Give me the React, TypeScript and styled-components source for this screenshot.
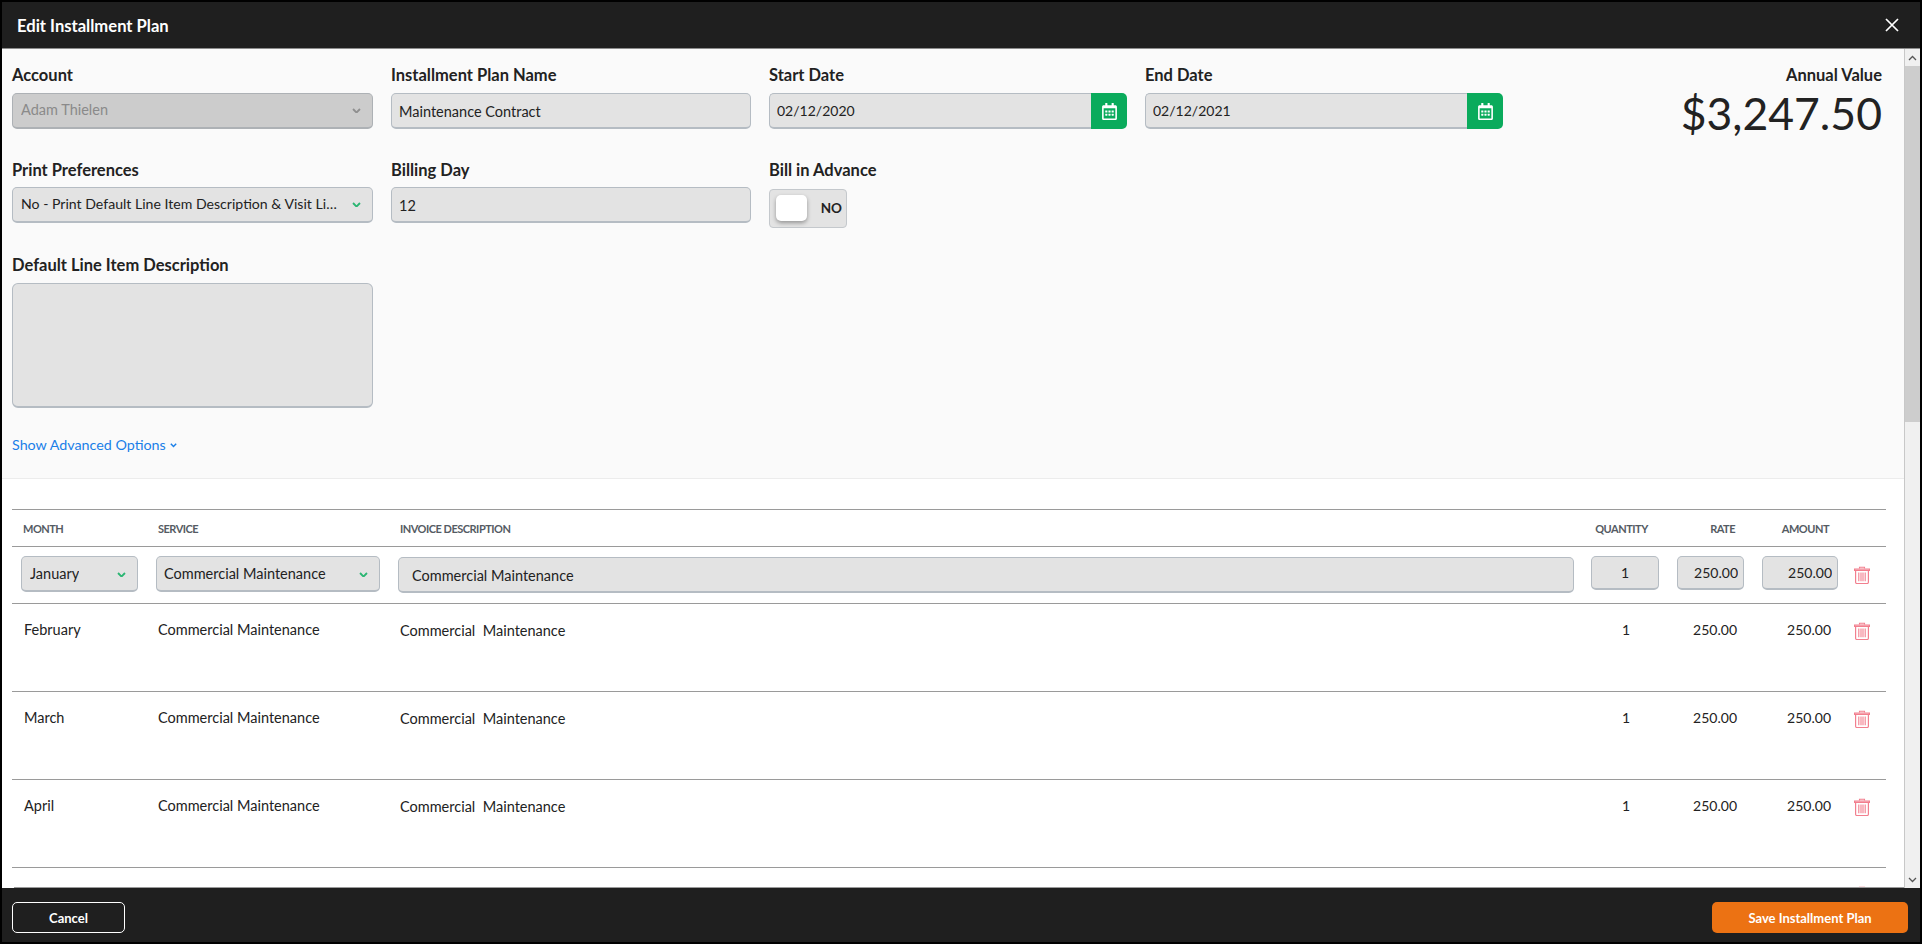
import styled, { createGlobalStyle } from "styled-components";
import { FaRegCalendarAlt } from "react-icons/fa";

const months = ["February", "March", "April", "May"];

const GlobalStyle = createGlobalStyle`
  html, body {
    margin: 0;
    padding: 0;
    background: #000;
    overflow: hidden;
  }
  * {
    box-sizing: border-box;
  }
  body, input, textarea, button {
    font-family: "Lato", "Liberation Sans", sans-serif;
  }
`;

const Chevron = ({ color = "#2bb673", size = 9 }: { color?: string; size?: number }) => (
  <StyledChevron width={size} height={size * 0.66} viewBox="0 0 9 6" fill="none">
    <path d="M1 1 4.5 4.6 8 1" stroke={color} strokeWidth="1.9" />
  </StyledChevron>
);

const TrashIcon = () => (
  <svg width="16" height="18" viewBox="0 0 16 18" fill="none" stroke="#f27f8e">
    <path d="M5.5 2.5V1.2h5v1.3" strokeWidth="1.1" />
    <path d="M.6 3h14.8v1.4H.6z" strokeWidth="1.2" />
    <path d="M1.6 4.5v11.8c0 .7.5 1.2 1.2 1.2h10.4c.7 0 1.2-.5 1.2-1.2V4.5" strokeWidth="1.2" />
    <path d="M4.8 6.5v8.8M7 6.5v8.8M9 6.5v8.8M11.2 6.5v8.8" strokeWidth="1.1" />
  </svg>
);

const App = () => {
  return (
    <StyledModal>
      <GlobalStyle />
      <StyledHeader>
        <StyledTitle>Edit Installment Plan</StyledTitle>
        <svg width="14" height="14" viewBox="0 0 14 14" stroke="#fff" strokeWidth="1.7">
          <path d="M1 1l12 12M13 1 1 13" />
        </svg>
      </StyledHeader>

      <StyledMiddle>
        <StyledContent>
          <StyledScroller>
            <StyledForm>
              <StyledFormRow $mb={31}>
                <StyledField $w={361}>
                  <StyledLabel>Account</StyledLabel>
                  <StyledSelect $disabled>
                    <span>Adam Thielen</span>
                    <Chevron color="#8f8f8f" />
                  </StyledSelect>
                </StyledField>
                <StyledField $w={360}>
                  <StyledLabel>Installment Plan Name</StyledLabel>
                  <StyledInput readOnly value="Maintenance Contract" />
                </StyledField>
                <StyledField $w={358}>
                  <StyledLabel>Start Date</StyledLabel>
                  <StyledDateGroup>
                    <StyledDateInput readOnly value="02/12/2020" />
                    <StyledDateButton>
                      <FaRegCalendarAlt size={17} />
                    </StyledDateButton>
                  </StyledDateGroup>
                </StyledField>
                <StyledField $w={358}>
                  <StyledLabel>End Date</StyledLabel>
                  <StyledDateGroup>
                    <StyledDateInput readOnly value="02/12/2021" />
                    <StyledDateButton>
                      <FaRegCalendarAlt size={17} />
                    </StyledDateButton>
                  </StyledDateGroup>
                </StyledField>
                <StyledAnnual>
                  <StyledLabel>Annual Value</StyledLabel>
                  <StyledAnnualValue>$3,247.50</StyledAnnualValue>
                </StyledAnnual>
              </StyledFormRow>

              <StyledFormRow $mb={27}>
                <StyledField $w={361}>
                  <StyledLabel $mb={7}>Print Preferences</StyledLabel>
                  <StyledSelect $fs={14.1}>
                    <span>No - Print Default Line Item Description &amp; Visit Line Items</span>
                    <Chevron />
                  </StyledSelect>
                </StyledField>
                <StyledField $w={360}>
                  <StyledLabel $mb={7}>Billing Day</StyledLabel>
                  <StyledInput readOnly value="12" />
                </StyledField>
                <StyledField $w={358}>
                  <StyledLabel $mb={9}>Bill in Advance</StyledLabel>
                  <StyledToggle>
                    <StyledKnob />
                    <span>NO</span>
                  </StyledToggle>
                </StyledField>
              </StyledFormRow>

              <StyledField $w={361}>
                <StyledLabel>Default Line Item Description</StyledLabel>
                <StyledTextArea readOnly />
              </StyledField>

              <StyledAdvanced>
                Show Advanced Options
                <Chevron color="#1a7fe8" size={7} />
              </StyledAdvanced>
            </StyledForm>

            <StyledTableSection>
              <StyledHeadRow>
                <StyledHeadCell $pl={2}>MONTH</StyledHeadCell>
                <StyledHeadCell $pl={2}>SERVICE</StyledHeadCell>
                <StyledHeadCell $pl={2}>INVOICE DESCRIPTION</StyledHeadCell>
                <StyledHeadCell $align="center" $pr={25}>QUANTITY</StyledHeadCell>
                <StyledHeadCell $align="right" $pr={27}>RATE</StyledHeadCell>
                <StyledHeadCell $align="right" $pr={25}>AMOUNT</StyledHeadCell>
                <span />
              </StyledHeadRow>

              <StyledEditRow>
                <StyledEditCell $pr={18}>
                  <StyledSelect $pb={1}>
                    <span>January</span>
                    <Chevron />
                  </StyledSelect>
                </StyledEditCell>
                <StyledEditCell $pr={18}>
                  <StyledSelect $pb={1} $pl={7}>
                    <span>Commercial Maintenance</span>
                    <Chevron />
                  </StyledSelect>
                </StyledEditCell>
                <StyledEditCell $pr={17} $pt={1}>
                  <StyledDescInput readOnly value="Commercial Maintenance" />
                </StyledEditCell>
                <StyledEditCell $pr={18}>
                  <StyledNumberInput $align="center" readOnly value="1" />
                </StyledEditCell>
                <StyledEditCell $pr={18}>
                  <StyledNumberInput $align="right" readOnly value="250.00" />
                </StyledEditCell>
                <StyledEditCell $pr={16}>
                  <StyledNumberInput $align="right" readOnly value="250.00" />
                </StyledEditCell>
                <StyledTrashCell $mt={10}>
                  <TrashIcon />
                </StyledTrashCell>
              </StyledEditRow>

              {months.map((month) => (
                <StyledRow key={month}>
                  <StyledCell $pl={3}>{month}</StyledCell>
                  <StyledCell $pl={2}>Commercial Maintenance</StyledCell>
                  <StyledDescCell>Commercial&nbsp; Maintenance</StyledDescCell>
                  <StyledNumberCell $align="center" $pr={16}>1</StyledNumberCell>
                  <StyledNumberCell $align="right" $pr={25}>250.00</StyledNumberCell>
                  <StyledNumberCell $align="right" $pr={23}>250.00</StyledNumberCell>
                  <StyledTrashCell $mt={2}>
                    <TrashIcon />
                  </StyledTrashCell>
                </StyledRow>
              ))}
            </StyledTableSection>
          </StyledScroller>
          <StyledBottomRule />
        </StyledContent>

        <StyledScrollbar>
          <StyledArrow>
            <svg width="9" height="6" viewBox="0 0 9 6" fill="none" stroke="#555" strokeWidth="1.3">
              <path d="M1 5 4.5 1.5 8 5" />
            </svg>
          </StyledArrow>
          <StyledThumb />
          <StyledTrack />
          <StyledArrow>
            <svg width="9" height="6" viewBox="0 0 9 6" fill="none" stroke="#555" strokeWidth="1.3">
              <path d="M1 1 4.5 4.5 8 1" />
            </svg>
          </StyledArrow>
        </StyledScrollbar>
      </StyledMiddle>

      <StyledFooter>
        <StyledCancel>Cancel</StyledCancel>
        <StyledSave>Save Installment Plan</StyledSave>
      </StyledFooter>
    </StyledModal>
  );
};

const StyledChevron = styled.svg`
  margin-top: 3px;
`;

const StyledModal = styled.div`
  width: 1922px;
  height: 944px;
  border: 2px solid #000;
  display: flex;
  flex-direction: column;
  background: #fff;
  color: #222;
`;

const StyledHeader = styled.div`
  height: 47px;
  flex-shrink: 0;
  padding: 0 21px 0 15px;
  display: flex;
  justify-content: space-between;
  align-items: center;
  background: #1f1f1f;
  border-bottom: 1px solid #8c8c8c;
`;

const StyledTitle = styled.div`
  padding-top: 1px;
  color: #fff;
  font-size: 16.6px;
  font-weight: 700;
`;

const StyledMiddle = styled.div`
  flex: 1;
  min-height: 0;
  display: flex;
`;

const StyledContent = styled.div`
  flex: 1;
  min-width: 0;
  display: flex;
  flex-direction: column;
`;

const StyledScroller = styled.div`
  flex: 1;
  min-height: 0;
  overflow: hidden;
`;

const StyledBottomRule = styled.div`
  height: 1px;
  margin-left: 12px;
  background: #9a9a9a;
`;

const StyledForm = styled.div`
  padding: 16px 22px 24px 10px;
  background: #fafafa;
  border-bottom: 1px solid #ececec;
`;

const StyledFormRow = styled.div<{ $mb: number }>`
  display: flex;
  gap: 18px;
  margin-bottom: ${(p) => p.$mb}px;
`;

const StyledField = styled.div<{ $w: number }>`
  width: ${(p) => p.$w}px;
  flex-shrink: 0;
`;

const StyledLabel = styled.div<{ $mb?: number }>`
  height: 20px;
  line-height: 20px;
  margin-bottom: ${(p) => p.$mb ?? 8}px;
  font-size: 16.5px;
  font-weight: 700;
  color: #222;
`;

const StyledSelect = styled.div<{ $disabled?: boolean; $pb?: number; $pl?: number; $fs?: number }>`
  height: 36px;
  padding: 0 11px ${(p) => p.$pb ?? 3}px ${(p) => p.$pl ?? 8}px;
  display: flex;
  align-items: center;
  justify-content: space-between;
  gap: 10px;
  background: ${(p) => (p.$disabled ? "#cccccc" : "#e3e3e3")};
  border: 1px solid ${(p) => (p.$disabled ? "#adb1b5" : "#b5bcc3")};
  border-bottom-width: 2px;
  border-radius: 5px;
  font-size: ${(p) => p.$fs ?? 14.5}px;
  color: ${(p) => (p.$disabled ? "#8a8a8a" : "#222")};

  span {
    min-width: 0;
    white-space: nowrap;
    overflow: hidden;
    text-overflow: ellipsis;
  }

  svg {
    flex-shrink: 0;
  }
`;

const StyledInput = styled.input`
  width: 100%;
  height: 36px;
  padding: 2px 7px 0;
  background: #e3e3e3;
  border: 1px solid #b5bcc3;
  border-bottom-width: 2px;
  border-radius: 5px;
  outline: none;
  font-size: 14.5px;
  color: #222;
`;

const StyledDateGroup = styled.div`
  display: flex;
  height: 36px;
`;

const StyledDateInput = styled(StyledInput)`
  flex: 1;
  min-width: 0;
  padding-top: 0;
  border-right: none;
  border-radius: 5px 0 0 5px;
  font-size: 14px;
`;

const StyledDateButton = styled.div`
  width: 36px;
  display: flex;
  align-items: center;
  justify-content: center;
  background: #0aab5c;
  border-radius: 0 5px 5px 0;
  color: #fff;
`;

const StyledAnnual = styled.div`
  margin-left: auto;
  text-align: right;
`;

const StyledAnnualValue = styled.div`
  height: 36px;
  line-height: 40px;
  font-size: 44.5px;
  color: #222;
`;

const StyledToggle = styled.div`
  width: 78px;
  height: 39px;
  padding: 0 4px 1px 6px;
  display: flex;
  align-items: center;
  justify-content: space-between;
  background: #e3e3e3;
  border: 1px solid #c4c8cc;
  border-radius: 4px;
  font-size: 13.5px;
  font-weight: 700;
`;

const StyledKnob = styled.div`
  width: 31px;
  height: 26px;
  background: #fff;
  border-radius: 5px;
  box-shadow: 0 2px 4px rgba(0, 0, 0, 0.35);
`;

const StyledTextArea = styled.textarea`
  display: block;
  width: 100%;
  height: 125px;
  background: #e3e3e3;
  border: 1px solid #b5bcc3;
  border-bottom-width: 2px;
  border-radius: 6px;
  outline: none;
  resize: none;
`;

const StyledAdvanced = styled.div`
  margin-top: 26px;
  height: 20px;
  display: flex;
  align-items: center;
  gap: 4px;
  font-size: 14.3px;
  color: #1a7fe8;
`;

const StyledTableSection = styled.div`
  padding: 30px 18px 0 10px;
  background: #fff;
`;

const columns = "135px 242px 1fr 86px 85px 92px 32px";

const StyledHeadRow = styled.div`
  display: grid;
  grid-template-columns: ${columns};
  height: 38px;
  padding-left: 9px;
  align-items: center;
  border-top: 1px solid #9a9a9a;
  border-bottom: 1px solid #9a9a9a;
`;

const StyledHeadCell = styled.div<{ $pl?: number; $pr?: number; $align?: string }>`
  padding-left: ${(p) => p.$pl ?? 0}px;
  padding-right: ${(p) => p.$pr ?? 0}px;
  text-align: ${(p) => p.$align ?? "left"};
  font-size: 11px;
  font-weight: 700;
  letter-spacing: -0.5px;
  color: #555b63;
`;

const StyledEditRow = styled.div`
  display: grid;
  grid-template-columns: ${columns};
  height: 57px;
  padding: 9px 0 0 9px;
  border-bottom: 1px solid #9a9a9a;
`;

const StyledEditCell = styled.div<{ $pr: number; $pt?: number }>`
  padding-right: ${(p) => p.$pr}px;
  padding-top: ${(p) => p.$pt ?? 0}px;
`;

const StyledDescInput = styled(StyledInput)`
  padding: 2px 13px 0;
`;

const StyledNumberInput = styled(StyledInput)<{ $align: string }>`
  height: 34px;
  padding: 0 5px;
  font-size: 14px;
  text-align: ${(p) => p.$align};
`;

const StyledTrashCell = styled.div<{ $mt: number }>`
  margin-top: ${(p) => p.$mt}px;
`;

const StyledRow = styled.div`
  display: grid;
  grid-template-columns: ${columns};
  height: 88px;
  padding: 16px 0 0 9px;
  border-bottom: 1px solid #9a9a9a;
`;

const StyledCell = styled.div<{ $pl?: number; $pr?: number; $align?: string }>`
  height: 20px;
  line-height: 20px;
  padding-left: ${(p) => p.$pl ?? 0}px;
  padding-right: ${(p) => p.$pr ?? 0}px;
  text-align: ${(p) => p.$align ?? "left"};
  font-size: 14.5px;
  color: #222;
`;

const StyledDescCell = styled(StyledCell)`
  padding-left: 2px;
  padding-top: 1px;
`;

const StyledNumberCell = styled(StyledCell)`
  font-size: 14px;
`;

const StyledScrollbar = styled.div`
  width: 16px;
  flex-shrink: 0;
  display: flex;
  flex-direction: column;
  background: #f0f0f0;
  border-left: 1px solid #c8c8c8;
`;

const StyledArrow = styled.div`
  height: 17px;
  display: flex;
  align-items: center;
  justify-content: center;
`;

const StyledThumb = styled.div`
  height: 356px;
  background: #cdcdcd;
`;

const StyledTrack = styled.div`
  flex: 1;
`;

const StyledFooter = styled.div`
  height: 54px;
  flex-shrink: 0;
  padding: 14px 12px 0 10px;
  display: flex;
  justify-content: space-between;
  align-items: flex-start;
  background: #1f1f1f;
`;

const StyledCancel = styled.button`
  width: 113px;
  height: 31px;
  background: transparent;
  border: 1px solid #fff;
  border-radius: 5px;
  color: #fff;
  font-size: 13px;
  font-weight: 700;
`;

const StyledSave = styled.button`
  width: 196px;
  height: 31px;
  background: #ec7213;
  border: none;
  border-radius: 5px;
  color: #fff;
  font-size: 13px;
  font-weight: 700;
`;

export default App;
